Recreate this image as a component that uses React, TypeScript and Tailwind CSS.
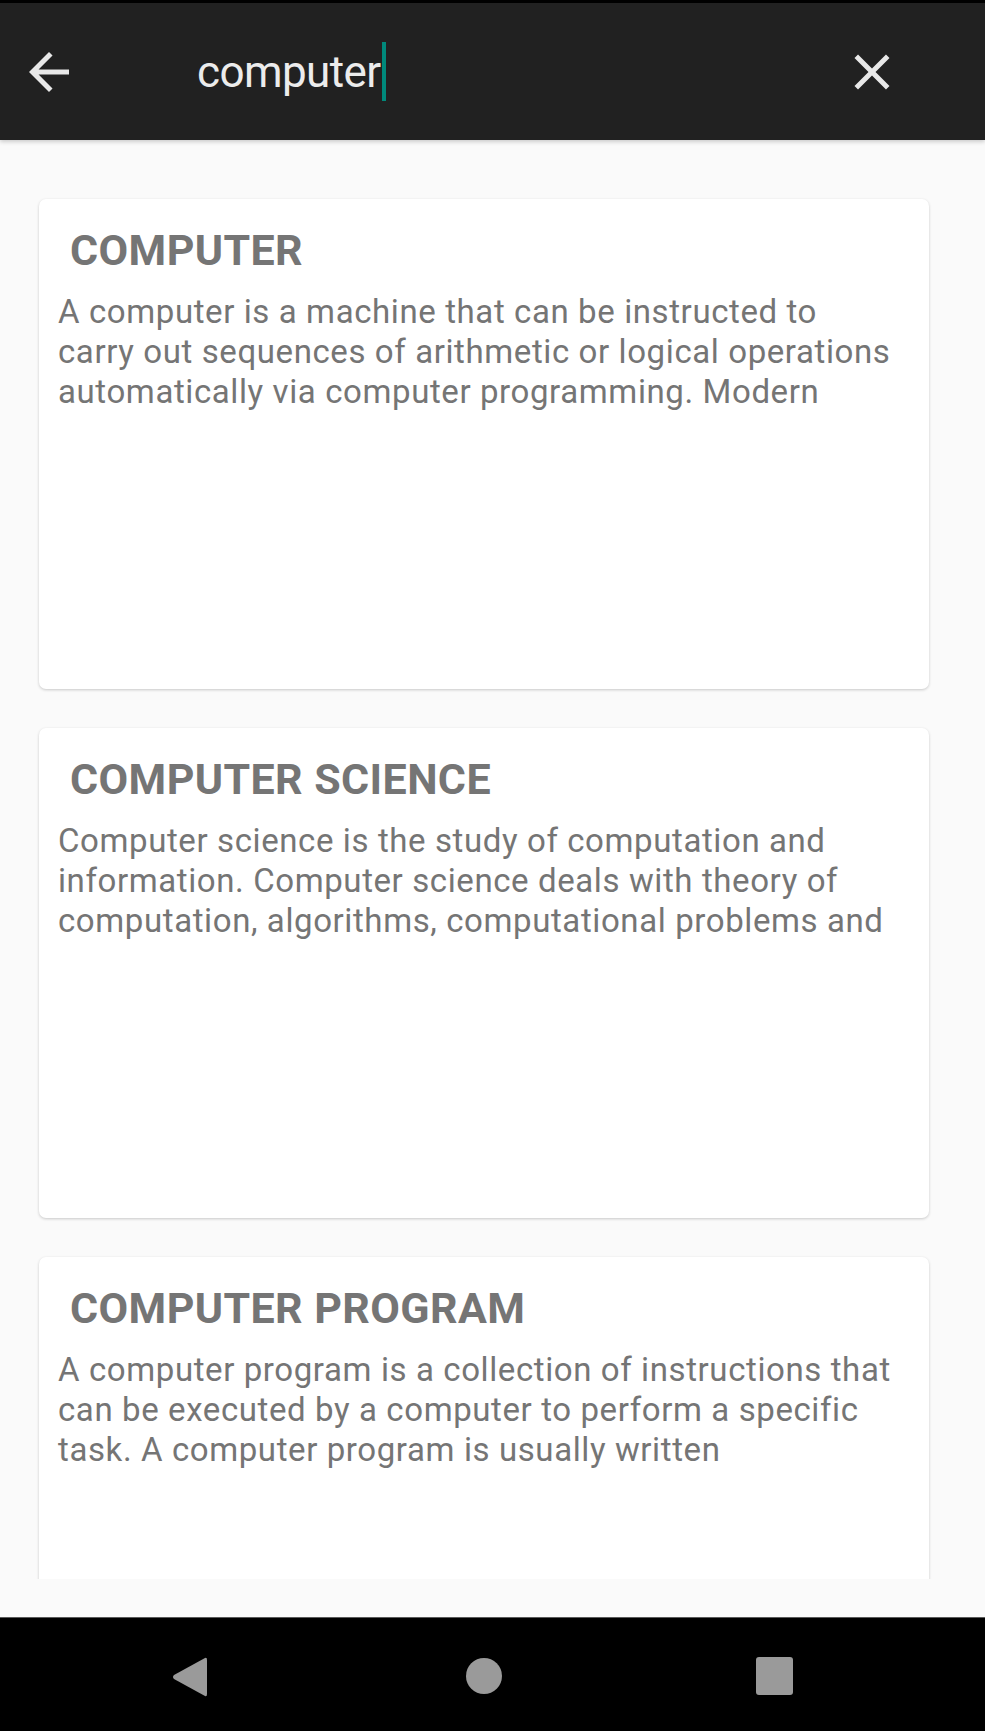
import React from "react";

const cards = [
  {
    title: "COMPUTER",
    body: "A computer is a machine that can be instructed to carry out sequences of arithmetic or logical operations automatically via computer programming. Modern",
  },
  {
    title: "COMPUTER SCIENCE",
    body: "Computer science is the study of computation and information. Computer science deals with theory of computation, algorithms, computational problems and",
  },
  {
    title: "COMPUTER PROGRAM",
    body: "A computer program is a collection of instructions that can be executed by a computer to perform a specific task. A computer program is usually written",
  },
];

export default function App() {
  return (
    <div
      className="w-[985px] h-[1731px] flex flex-col bg-[#fafafa] overflow-hidden"
      style={{ fontFamily: "Roboto, 'Noto Sans', sans-serif" }}
    >
      <div className="h-[3px] bg-black shrink-0" />
      <header className="relative z-10 h-[137px] shrink-0 bg-[#212121] flex items-center pl-[19px] pr-[83px] shadow-[0_2px_4px_rgba(0,0,0,0.18)]">
        <svg width="60" height="60" viewBox="0 0 24 24" className="shrink-0">
          <path
            fill="#e8e8e8"
            d="M20 11H7.83l5.59-5.59L12 4l-8 8 8 8 1.41-1.41L7.83 13H20v-2z"
          />
        </svg>
        <div className="flex items-center ml-[118px] flex-1">
          <span className="text-[44px] leading-[52px] text-[#ececec] tracking-[-0.6px]">computer</span>
          <span className="inline-block w-[4px] h-[59px] bg-[#00897b] ml-[1px]" />
        </div>
        <svg width="60" height="60" viewBox="0 0 24 24" className="shrink-0">
          <path
            fill="#e8e8e8"
            d="M19 6.41L17.59 5 12 10.59 6.41 5 5 6.41 10.59 12 5 17.59 6.41 19 12 13.41 17.59 19 19 17.59 13.41 12z"
          />
        </svg>
      </header>
      <main className="flex-1 flex flex-col">
        <div className="h-[1439px] overflow-hidden pt-[59px] pl-[39px] pr-[56px] flex flex-col gap-[39px]">
          {cards.map((c) => (
            <div
              key={c.title}
              className="h-[490px] shrink-0 bg-white rounded-[7px] shadow-[0_1px_3px_rgba(0,0,0,0.2)] pt-[26px] pl-[19px] pr-[32px]"
            >
              <div className="pl-[12px] text-[43px] leading-[50px] font-bold text-[#757575] tracking-[0.4px]">
                {c.title}
              </div>
              <div className="mt-[17px] text-[33px] leading-[40px] text-[#757575] tracking-[0.6px]">
                {c.body}
              </div>
            </div>
          ))}
        </div>
      </main>
      <nav className="h-[114px] shrink-0 bg-black border-t border-[#5a5a5a] flex items-center">
        <div className="w-full relative h-full">
          <svg
            className="absolute left-[172px] top-[38px]"
            width="36"
            height="42"
            viewBox="0 0 36 42"
          >
            <path
              d="M33 2 Q35 1 35 4 L35 38 Q35 41 33 40 L2 23 Q0 21 2 19 Z"
              fill="#9a9a9a"
            />
          </svg>
          <div className="absolute left-[466px] top-[40px] w-[36px] h-[36px] rounded-full bg-[#9a9a9a]" />
          <div className="absolute left-[756px] top-[39px] w-[37px] h-[38px] rounded-[3px] bg-[#9a9a9a]" />
        </div>
      </nav>
    </div>
  );
}
